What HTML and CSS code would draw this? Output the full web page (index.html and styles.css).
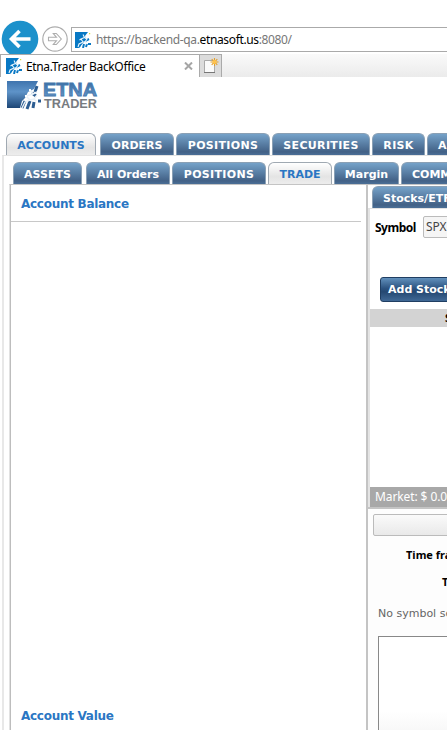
FILE: index.html
```html
<!DOCTYPE html>
<html lang="en">
<head>
<meta charset="utf-8">
<title>Etna.Trader BackOffice</title>
<link rel="stylesheet" href="styles.css">
</head>
<body>
<svg class="defs" width="0" height="0">
  <defs>
    <linearGradient id="logoBlue" x1="0" y1="0" x2="0" y2="1"><stop offset="0" stop-color="#3f74ae"/><stop offset=".4" stop-color="#5e93c8"/><stop offset="1" stop-color="#1d4676"/></linearGradient>
    <linearGradient id="etnaBlue" x1="0" y1="0" x2="0" y2="1"><stop offset="0" stop-color="#34689f"/><stop offset="1" stop-color="#6b9ccc"/></linearGradient>
    <symbol id="fav" viewBox="0 0 16 16">
      <path fill="#0878c4" d="M0 0h13l-3 4 1 4-3 3-4 5H0z"/>
      <path d="M4 15l2-4M8 16l1-4M11 15l1-3M10 9l4-2M13 12h3" stroke="#0878c4" stroke-width="2" fill="none"/>
      <path d="M8 2.500l1.500 3L6 7l2 3-4 2-1 3M9.500 5.500L12 7l-2 3 2 2M8 10h2M6 7L4.500 8" stroke="#eaf5fc" stroke-width="1.100" fill="none"/>
      <path d="M14 1h1.200v1.200H14z" fill="#d8df3a"/>
    </symbol>
  </defs>
</svg>
<header class="nav">
  <svg class="arrows" width="71" height="34" viewBox="0 0 71 34">
    <circle cx="20" cy="19" r="18.3" fill="#1c91cb"/>
    <path d="M30.500 19H12M19.500 11l-8 8 8 8" fill="none" stroke="#fff" stroke-width="3.600"/>
    <circle cx="55" cy="19" r="12.200" fill="#fff" stroke="#adadad" stroke-width="1.200"/>
    <path d="M48.500 17.300h8l-3.200-3.800h3l5 5.500-5 5.500h-3l3.200-3.800h-8z" fill="#fff" stroke="#adadad" stroke-width="1.100"/>
  </svg>
  <div class="address"><svg width="16" height="16"><use href="#fav"/></svg><span class="url">https://backend-qa.<b>etnasoft.us</b>:8080/</span></div>
</header>
<div class="browser-tabs">
  <div class="browser-tab"><svg width="16" height="16"><use href="#fav"/></svg><span class="page-title">Etna.Trader BackOffice</span>
    <svg class="close" width="9" height="8" viewBox="0 0 9 8"><path d="M1 .5l7 7M8 .5l-7 7" stroke="#a5a5a5" stroke-width="2"/></svg></div>
  <div class="new-tab"><svg width="22" height="22" viewBox="0 0 22 22"><path d="M4.500 5.500h10v12h-10z" fill="#fafafa" stroke="#aaa"/><path d="M4 17.500h11" stroke="#777"/><path d="M14.500 3v8M10.500 7h8M11.700 4.200l5.600 5.600M17.300 4.200l-5.600 5.600" stroke="#e3a02c" stroke-width="1.100"/><circle cx="14.500" cy="7" r="2" fill="#ffc34d"/></svg></div>
</div>
<div class="brand">
  <svg width="92" height="30" viewBox="0 0 92 30">
    <path fill="url(#logoBlue)" d="M0 0h31l-4 8-6 3-3 6-3 3-2 7H0z"/>
    <path d="M15 27l3-7M20 28l3-8M26 27l1-6M28 11l2-6M31 20h3M25 12l4 3" stroke="#2c5d92" stroke-width="3" fill="none"/>
    <path d="M23 9l3 4-7 2 4 4-5 2-3 6M26 13l4-2M23 19l4-1 3 3M27 18l3-4" stroke="#e9f1f8" stroke-width="1.400" fill="none"/>
    <path d="M22 8h2v2h-2zM29 20h2v2h-2zM18 14h2v2h-2z" fill="#fff"/>
    <text class="etna" x="36" y="14.500" textLength="54" lengthAdjust="spacingAndGlyphs">ETNA</text>
    <text class="trader" x="37" y="27" textLength="53" lengthAdjust="spacingAndGlyphs">TRADER</text>
  </svg>
</div>
<nav class="tabs main-tabs">
  <a class="tab active w90">ACCOUNTS</a><a class="tab w74">ORDERS</a><a class="tab wide w94">POSITIONS</a><a class="tab wide w98">SECURITIES</a><a class="tab wide w53">RISK</a><a class="tab w94 cut">ALERTS</a>
</nav>
<main class="outer">
  <nav class="tabs sub-tabs">
    <a class="tab w69">ASSETS</a><a class="tab w84">All Orders</a><a class="tab wide w94">POSITIONS</a><a class="tab active w64">TRADE</a><a class="tab w65">Margin</a><a class="tab w110 cut">COMMISSIONS</a>
  </nav>
  <div class="workspace">
    <section class="left">
      <h2 class="balance">Account Balance</h2>
      <h2 class="value">Account Value</h2>
    </section>
    <section class="right">
      <div class="tabs stock-tabs"><a class="tab w110 cut">Stocks/ETFs</a></div>
      <div class="order">
        <div class="symbol"><b>Symbol</b><span class="input">SPX</span></div>
        <div class="add">Add Stock</div>
        <div class="columns">Symbol</div>
        <div class="market">Market: $ 0.00</div>
      </div>
      <div class="chart">
        <div class="toolbar"></div>
        <b class="frame">Time frame</b>
        <b class="type">Type</b>
        <p class="empty">No symbol selected</p>
        <div class="plot"></div>
      </div>
    </section>
  </div>
</main>
</body>
</html>
```

FILE: styles.css
```css
* { box-sizing: border-box; }
html { overflow: hidden; }
body { margin: 0; width: 447px; height: 730px; overflow: hidden; background: #fff; font: 11px "DejaVu Sans", sans-serif; display: flex; flex-direction: column; }
.defs { position: absolute; }
svg { display: block; flex: none; }
.nav { height: 54px; padding-top: 20px; display: flex; flex: none; }
.address { height: 25px; margin-top: 7px; border: 1px solid #aaa; border-right: 0; flex: 1; display: flex; align-items: center; padding-left: 3px; font: 12px "Noto Sans", sans-serif; color: #777; white-space: nowrap; }
.url { margin-left: 5px; letter-spacing: -.36px; }
.url b { font-weight: 400; color: #000; }
.browser-tabs { height: 23px; flex: none; display: flex; background: linear-gradient(#fafafa, #ebebeb); }
.browser-tab { width: 199px; border: 1px solid #aaa; border-bottom: 0; border-right: 0; background: #fff; display: flex; align-items: center; padding: 0 6px 0 5px; font: 12px "Noto Sans", sans-serif; color: #000; }
.page-title { margin-left: 4px; white-space: nowrap; letter-spacing: -.35px; }
.close { margin-left: auto; }
.new-tab { width: 23px; border: 1px solid #aaa; border-bottom: 0; background: #dcdcdc; }
.brand { height: 56px; flex: none; padding: 4px 0 0 7px; }
.etna { font: bold 18px "Liberation Sans", sans-serif; fill: url(#etnaBlue); stroke: #4679ad; stroke-width: .8px; }
.trader { font: bold 13.5px "Liberation Sans", sans-serif; fill: #777b80; }
.tabs { display: flex; gap: 2px; flex: none; height: 22px; }
.tab { flex: none; height: 22px; border: 1px solid #8aa0b5; border-bottom: 0; border-radius: 6px 6px 0 0; background: linear-gradient(#75a2c9, #426186 85%, #4b6f97); color: #fff; font-weight: 700; line-height: 23px; text-align: center; white-space: nowrap; letter-spacing: 0; }
.tab.wide { letter-spacing: .33px; }
.tab.active { color: #2a76c3; background: linear-gradient(#fff, #e4e4e4 65%, #ededed); border: 1px solid #a0a9b2; border-bottom: 0; }
.tab.cut { text-align: left; padding-left: 10px; }
.w53 { width: 53px; } .w64 { width: 64px; } .w65 { width: 65px; } .w69 { width: 69px; } .w74 { width: 74px; } .w84 { width: 84px; } .w90 { width: 90px; } .w94 { width: 94px; } .w98 { width: 98px; } .w110 { width: 110px; }
.main-tabs { padding-left: 6px; }
.main-tabs .w90, .sub-tabs .w69 { margin-right: 2px; }
.outer { flex: 1; margin-left: 2px; border-left: 2px solid #e8e8e8; border-top: 1px solid #e2e2e2; padding-left: 5px; padding-top: 6px; display: flex; flex-direction: column; }
.sub-tabs { padding-left: 4px; }
.workspace { flex: 1; display: flex; border-left: 1px solid #e2e2e2; border-top: 1px solid #c4c4c4; }
.left { width: 356px; border-left: 1px solid #bdbdbd; display: flex; flex-direction: column; }
h2 { margin: 0; padding-left: 10px; font-size: 12px; line-height: 18px; color: #2a76c3; letter-spacing: -.28px; }
.balance { height: 37px; padding-top: 10px; margin-right: 5px; border-bottom: 1px solid #c8c8c8; }
.value { margin-top: 485px; }
.right { width: 81px; border-left: 2px solid #c4c4c4; display: flex; flex-direction: column; background: #fdfdfd; overflow: hidden; }
.stock-tabs { padding-left: 4px; margin-top: 1px; background: #fff; }
.order { height: 301px; flex: none; border: 2px solid #c4c4c4; border-width: 1px 0 2px; border-top-color: #e2e2e2; background: #fff; box-shadow: inset 2px 0 #e4e4e4; padding-left: 2px; display: flex; flex-direction: column; }
.symbol { display: flex; align-items: center; height: 22px; margin: 7px 0 39px 5px; font: 12px "Noto Sans", sans-serif; color: #000; }
.symbol b { width: 48px; flex: none; letter-spacing: -.5px; }
.input { height: 22px; width: 80px; flex: none; padding-left: 2px; line-height: 20px; color: #444; background: #f5f5f5; border: 1px solid #bbb; border-radius: 2px; }
.add { margin-left: 10px; width: 90px; height: 25px; padding-left: 7px; border: 1px solid #203e62; border-radius: 3px; background: linear-gradient(#6190bc, #2c5380 45%, #254872 60%, #406895); color: #fff; font: bold 11px/23px "DejaVu Sans", sans-serif; white-space: nowrap; }
.columns { margin-top: 7px; height: 18px; background: #d3d3d3; padding-left: 75px; font: bold 11px/18px "Noto Sans", sans-serif; white-space: nowrap; overflow: hidden; }
.market { margin-top: auto; height: 20px; background: #a8a8a8; color: #fff; padding-left: 5px; font: 12px/19px "Noto Sans", sans-serif; white-space: nowrap; letter-spacing: -.1px; }
.chart { flex: 1; display: flex; flex-direction: column; }
.toolbar { margin: 5px 0 0 5px; width: 100px; height: 22px; border: 1px solid #bbb; border-radius: 2px; background: linear-gradient(#fafafa, #e9e9e9); flex: none; }
.frame, .type { font: bold 11px/18px "Noto Sans", sans-serif; color: #000; white-space: nowrap; }
.frame { margin: 10px 0 0 38px; }
.type { margin: 9px 0 0 74px; }
.empty { margin: 14px 0 0 10px; line-height: 18px; color: #666; white-space: nowrap; letter-spacing: 0; }
.plot { margin: 13px 0 0 10px; width: 100px; flex: 1; border: 1px solid #888; border-bottom: 0; background: linear-gradient(#fff 80%, #f8f8f8); }
```
